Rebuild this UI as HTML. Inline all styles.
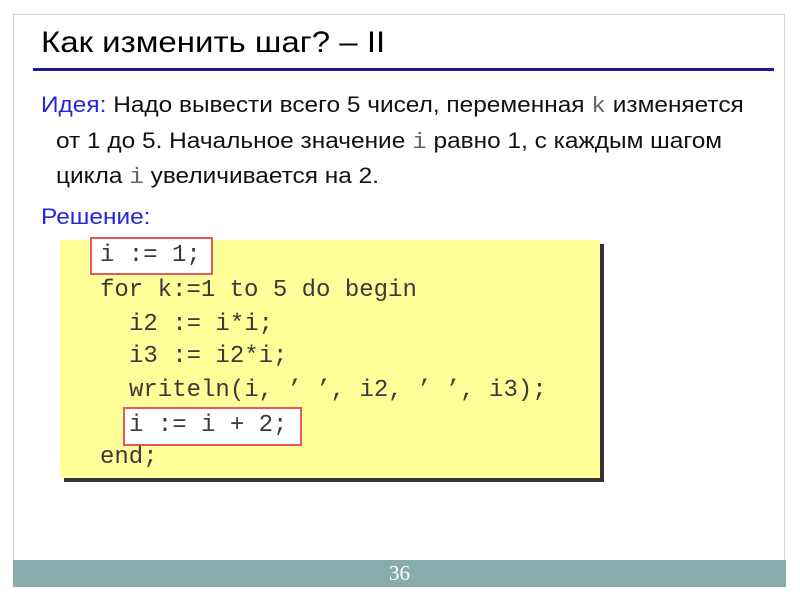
<!DOCTYPE html>
<html><head><meta charset="utf-8"><style>
body{margin:0;width:800px;height:600px;background:#fff;position:relative;overflow:hidden;font-family:"Liberation Sans",sans-serif}
.frame{position:absolute;left:13px;top:14px;width:772px;height:573px;border:1px solid #c8d4d4;box-sizing:border-box}
.foot{position:absolute;left:13px;top:560px;width:773px;height:27px;background:#8aabab;color:#fff;font-family:"Liberation Serif",serif;font-size:21px;text-align:center;line-height:27px}
.title{position:absolute;left:41px;top:26px;font-size:30px;color:#000;white-space:nowrap;transform:scaleX(1.1);transform-origin:left}
.line{position:absolute;left:33px;top:68px;width:741px;height:3px;background:#1c1c8c}
.t{position:absolute;font-size:22px;color:#111;white-space:nowrap;transform:scaleX(1.11);transform-origin:left}
.b{color:#2626d9}
.m{font-family:"Liberation Mono",monospace;color:#666}
.code{position:absolute;left:60px;top:240px;width:540px;height:238px;background:#ffff99;box-shadow:4px 4px 0 #333}
.c{position:absolute;font-family:"Liberation Mono",monospace;font-size:24px;color:#3a3a3a;white-space:pre}
.r{position:absolute;border:2px solid #e8585c;background:#fff;box-sizing:border-box}
</style></head><body>
<div class="frame"></div>
<div class="title">Как изменить шаг? – II</div>
<div class="line"></div>
<div class="t" style="left:41px;top:92px"><span class="b">Идея:</span> Надо вывести всего 5 чисел, переменная <span class="m">k</span> изменяется</div>
<div class="t" style="left:56px;top:128px">от 1 до 5. Начальное значение <span class="m">i</span> равно 1, с каждым шагом</div>
<div class="t" style="left:56px;top:163px">цикла <span class="m">i</span> увеличивается на 2.</div>
<div class="t b" style="left:41px;top:204px">Решение:</div>
<div class="code"></div>
<div class="r" style="left:90px;top:237px;width:123px;height:38px"></div>
<div class="r" style="left:123px;top:407px;width:179px;height:39px"></div>
<div class="c" style="left:100px;top:242px">i := 1;</div>
<div class="c" style="left:100px;top:277px">for k:=1 to 5 do begin</div>
<div class="c" style="left:129px;top:311px">i2 := i*i;</div>
<div class="c" style="left:129px;top:343px">i3 := i2*i;</div>
<div class="c" style="left:129px;top:377px">writeln(i, ’ ’, i2, ’ ’, i3);</div>
<div class="c" style="left:129px;top:412px">i := i + 2;</div>
<div class="c" style="left:100px;top:444px">end;</div>
<div class="foot">36</div>
</body></html>
